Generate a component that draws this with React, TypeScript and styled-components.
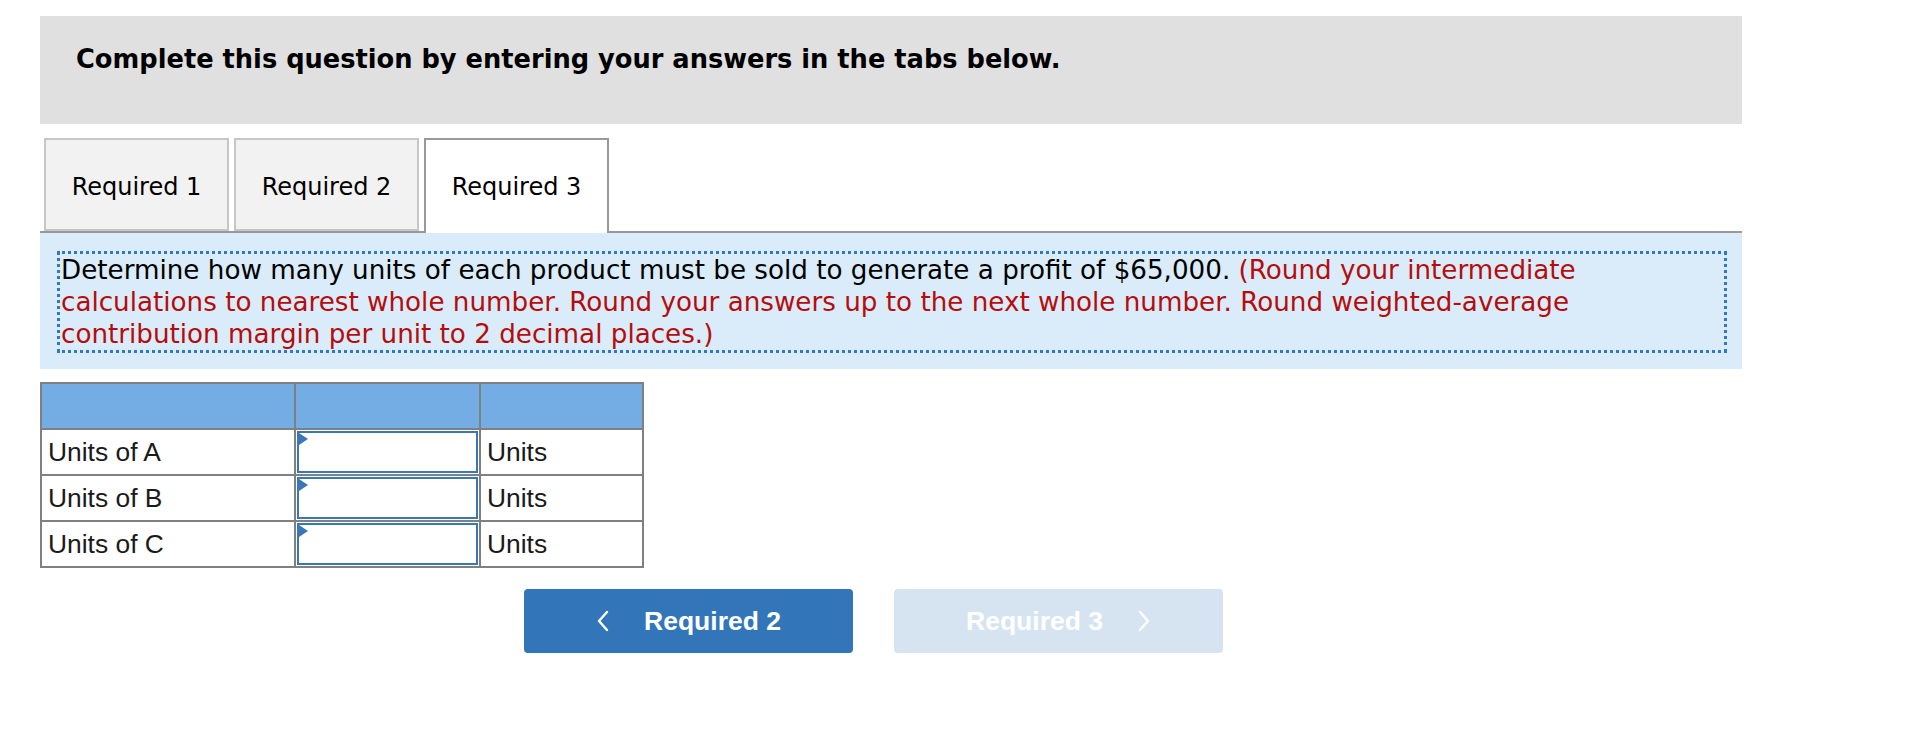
import styled, { createGlobalStyle } from 'styled-components';

const GlobalStyle = createGlobalStyle`
  body {
    margin: 0;
    background: #ffffff;
    font-family: Verdana, "DejaVu Sans", sans-serif;
  }
`;

const Page = styled.div`
  width: 1702px;
  padding: 16px 0 0 40px;
`;

const Banner = styled.div`
  height: 108px;
  box-sizing: border-box;
  padding: 28px 0 0 36px;
  background: #e0e0e0;
`;

const BannerText = styled.h1`
  margin: 0;
  font-size: 25.7px;
  line-height: 30px;
  font-weight: bold;
  color: #000;
`;

const TabBar = styled.div`
  margin-top: 14px;
  padding-left: 4px;
  height: 93px;
  display: flex;
  align-items: flex-start;
  gap: 5px;
  border-bottom: 2px solid #999999;
`;

const Tab = styled.button<{ $active?: boolean }>`
  width: 185px;
  height: ${(p) => (p.$active ? '95px' : '93px')};
  box-sizing: border-box;
  border: 2px solid ${(p) => (p.$active ? '#999999' : '#c6c6c6')};
  border-bottom: ${(p) => (p.$active ? 'none' : '2px solid #c6c6c6')};
  background: ${(p) => (p.$active ? '#ffffff' : '#f2f2f2')};
  font-family: Verdana, "DejaVu Sans", sans-serif;
  font-size: 24px;
  line-height: 28px;
  color: #000;
  padding: 33px 0 0;
  display: flex;
  justify-content: center;
  cursor: pointer;
`;

const InfoPanel = styled.div`
  background: #daecf9;
  padding: 18px 15px 16px 17px;
`;

const Instructions = styled.p`
  margin: 0;
  border: 3px dotted #3277c1;
  padding: 0 0 0 1px;
  font-size: 26.2px;
  line-height: 32px;
  color: #000;
`;

const Note = styled.span`
  color: #b50d0d;
`;

const Grid = styled.table`
  margin-top: 13px;
  border-collapse: collapse;
  font-family: Arial, "Liberation Sans", sans-serif;
  font-size: 26.4px;
  color: #1a1a1a;
`;

const HeadCell = styled.th<{ $w: number }>`
  width: ${(p) => p.$w}px;
  height: 44px;
  padding: 0;
  background: #74ade3;
  border: 2px solid #808080;
`;

const Cell = styled.td`
  height: 44px;
  padding: 0 0 0 6px;
  border: 2px solid #808080;
  white-space: nowrap;
  line-height: 30px;
`;

const InputCell = styled.td`
  position: relative;
  height: 42px;
  padding: 1px;
  border: 2px solid #808080;
`;

const AnswerInput = styled.input`
  display: block;
  width: 100%;
  height: 42px;
  box-sizing: border-box;
  border: 2px solid #3a77b8;
  background: #fff;
  font-size: 20px;
  outline: none;
`;

const Marker = styled.span`
  position: absolute;
  left: 3px;
  top: 3px;
  width: 0;
  height: 0;
  border-top: 6px solid transparent;
  border-bottom: 6px solid transparent;
  border-left: 9px solid #3a77b8;
`;

const NavRow = styled.div`
  margin-top: 21px;
  padding-left: 484px;
  display: flex;
  gap: 41px;
`;

const NavButton = styled.button<{ $disabled?: boolean }>`
  width: 329px;
  height: 64px;
  border: none;
  border-radius: 4px;
  background: ${(p) => (p.$disabled ? '#d6e4f2' : '#3276b9')};
  color: #ffffff;
  font-family: Arial, "Liberation Sans", sans-serif;
  font-size: 26.5px;
  font-weight: bold;
  display: flex;
  align-items: center;
  justify-content: center;
  gap: 34px;
  cursor: ${(p) => (p.$disabled ? 'default' : 'pointer')};
`;

const Chevron = ({ dir }: { dir: 'left' | 'right' }) => (
  <svg width="14" height="22" viewBox="0 0 14 22" fill="none">
    <polyline
      points={dir === 'left' ? '11,2 3,11 11,20' : '3,2 11,11 3,20'}
      stroke="#ffffff"
      strokeWidth="2.4"
      strokeLinecap="round"
      strokeLinejoin="round"
    />
  </svg>
);

const rows = ['Units of A', 'Units of B', 'Units of C'];

export default function App() {
  return (
    <Page>
      <GlobalStyle />
      <Banner>
        <BannerText>Complete this question by entering your answers in the tabs below.</BannerText>
      </Banner>
      <TabBar>
        <Tab>Required 1</Tab>
        <Tab>Required 2</Tab>
        <Tab $active>Required 3</Tab>
      </TabBar>
      <InfoPanel>
        <Instructions>
          Determine how many units of each product must be sold to generate a profit of $65,000.{' '}
          <Note>
            (Round your intermediate calculations to nearest whole number. Round your answers up to
            the next whole number. Round weighted-average contribution margin per unit to 2 decimal
            places.)
          </Note>
        </Instructions>
      </InfoPanel>
      <Grid>
        <thead>
          <tr>
            <HeadCell $w={252} />
            <HeadCell $w={183} />
            <HeadCell $w={161} />
          </tr>
        </thead>
        <tbody>
          {rows.map((label) => (
            <tr key={label}>
              <Cell>{label}</Cell>
              <InputCell>
                <AnswerInput type="text" />
                <Marker />
              </InputCell>
              <Cell>Units</Cell>
            </tr>
          ))}
        </tbody>
      </Grid>
      <NavRow>
        <NavButton>
          <Chevron dir="left" />
          Required 2
        </NavButton>
        <NavButton $disabled>
          Required 3
          <Chevron dir="right" />
        </NavButton>
      </NavRow>
    </Page>
  );
}
